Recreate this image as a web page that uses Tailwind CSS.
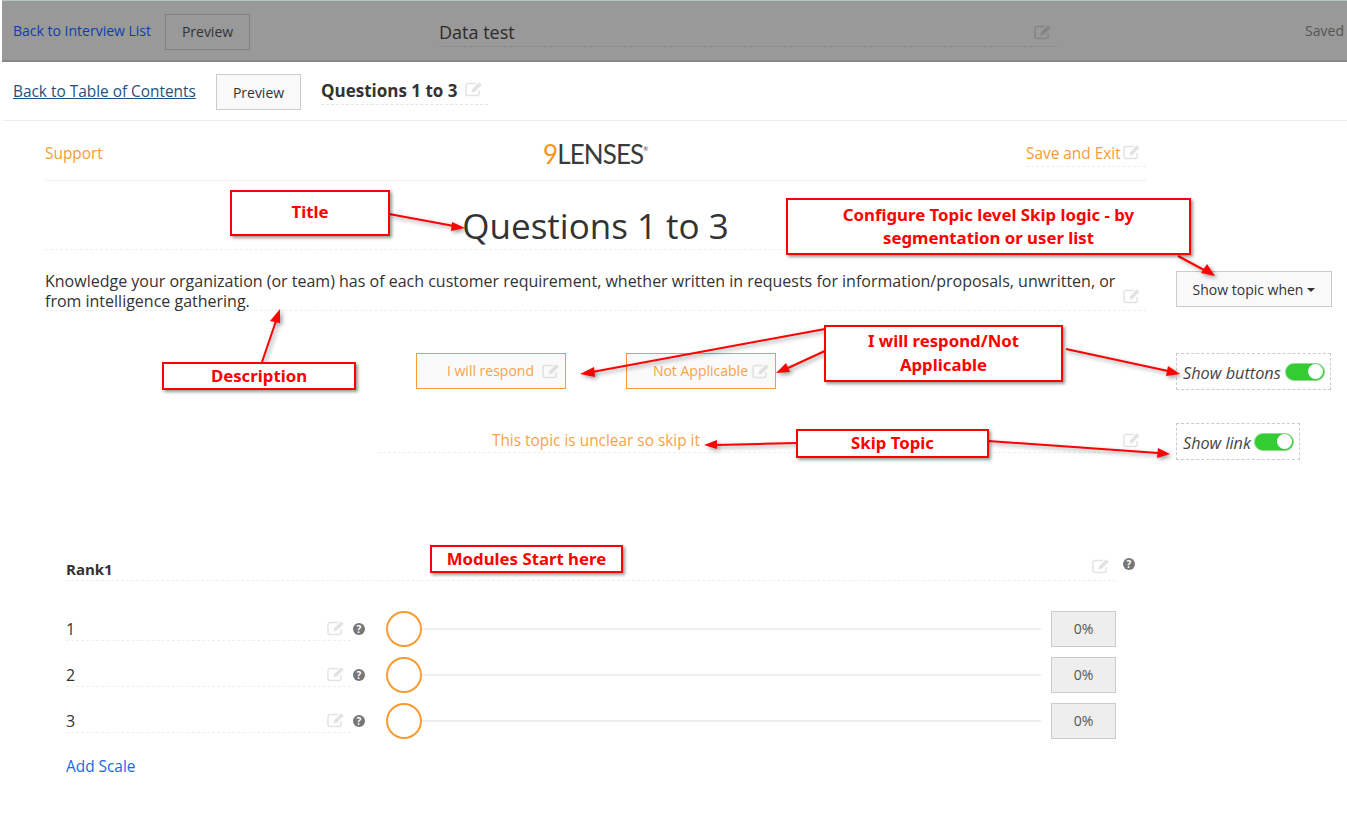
<!DOCTYPE html>
<html>
<head>
<meta charset="utf-8">
<script src="https://cdn.jsdelivr.net/npm/@tailwindcss/browser@4"></script>
</head>
<body class="relative w-[1347px] h-[827px] overflow-hidden bg-white font-['Open_Sans',sans-serif] text-[#333]">
<svg class="hidden"><symbol id="edit" viewBox="0 0 18 16"><path d="M14 9v3.500a2 2 0 0 1-2 2H3a2 2 0 0 1-2-2V4.500a2 2 0 0 1 2-2h8" fill="none" stroke="currentColor" stroke-width="1.500"/><path d="M6.500 11.500l.6-3.200L14 1.200l2.800 2.600-7 7z" fill="currentColor"/></symbol></svg>

<header class="h-[62px] ml-[2px] bg-[#999] border-t border-t-[#b9c6c9] border-b-2 border-b-[#888] flex items-center pl-[11px] text-[14px]">
  <a class="text-[#0b3fa8] w-[152px]">Back to Interview List</a>
  <span class="w-[85px] h-[36px] mt-[2px] border border-[#808080] flex items-center justify-center text-[#333]">Preview</span>
  <div class="ml-[189px] w-[618px] h-[28px] mt-[4px] border-b border-dashed border-[#8a8a8a] flex items-center justify-between pr-[5px] text-[18px]"><span class="text-[#2b2b2b]">Data test</span><svg class="w-[18px] h-[16px] text-[#858585]"><use href="#edit"/></svg></div>
  <span class="ml-auto mr-[3px] text-[#555]">Saved</span>
</header>

<div class="h-[59px] ml-[3px] pl-[10px] border-b border-[#eee] flex items-center text-[14px]">
  <a class="underline text-[#23527c] text-[15.400px] w-[203px] whitespace-nowrap mt-[2px]">Back to Table of Contents</a>
  <span class="w-[85px] h-[36px] mt-[2px] border border-[#ccc] bg-[#f9f9f9] flex items-center justify-center">Preview</span>
  <div class="ml-[20px] w-[167px] h-[27px] mt-[1px] border-b border-dashed border-[#e5e5e5] flex items-center gap-[7px] text-[17px] font-bold"><span>Questions 1 to 3</span><svg class="w-[18px] h-[16px] -mt-[5px] text-[#e3e3e3]"><use href="#edit"/></svg></div>
</div>

<main class="ml-[45px] w-[1302px]">
  <div class="w-[1101px] h-[60px] border-b border-[#eee] flex items-center justify-between text-[15.400px] text-[#f89b35] relative">
    <span class="mt-[6px]">Support</span>
    <span class="absolute left-[498px] top-[13px] font-['Lato',sans-serif] text-[26px] leading-[40px] tracking-[-0.9px] text-[#3a3a3a]"><span class="text-[#f7941e]">9</span>LENSES<sup class="text-[6px] align-super">®</sup></span>
    <span class="ml-auto w-[120px] h-[26px] mt-[7px] border-b border-dashed border-[#eee] flex items-center gap-[2px] whitespace-nowrap"><span>Save and Exit</span><svg class="w-[18px] h-[16px] -mt-[3px] shrink-0 text-[#e3e3e3]"><use href="#edit"/></svg></span>
  </div>

  <div class="w-[1101px] h-[69px] border-b border-dashed border-[#eee] flex items-center justify-center relative">
    <h1 class="text-[35px] font-normal leading-[50px] mt-[22px] text-[#333]">Questions 1 to 3</h1>
    <svg class="absolute right-[5px] top-[35px] w-[18px] h-[16px] text-[#e3e3e3]"><use href="#edit"/></svg>
  </div>

  <div class="flex mt-[20px]">
    <div class="w-[1101px] h-[41px] border-b border-dashed border-[#eee] text-[16px] leading-[20px] relative">
      <p class="w-[1085px] pt-[1px]">Knowledge your organization (or team) has of each customer requirement, whether written in requests for information/proposals, unwritten, or from intelligence gathering.</p>
      <svg class="absolute right-[5px] top-[18px] w-[18px] h-[16px] text-[#e3e3e3]"><use href="#edit"/></svg>
    </div>
    <button class="ml-[30px] w-[156px] h-[36px] mt-[1px] border border-[#ccc] bg-[#f9f9f9] text-[14px] flex items-center justify-center gap-[4px]">Show topic when<span class="mt-[2px] border-x-[4px] border-x-transparent border-t-[4px] border-t-[#333]"></span></button>
  </div>

  <div class="flex mt-[42px]">
    <div class="w-[1101px] pl-[371px] flex gap-[60px] text-[14px] text-[#f9a24a]">
      <span class="w-[150px] h-[36px] border border-[#f89b35] bg-[#fafafa] flex items-center justify-end pr-[5px] gap-[8px]"><span class="-mt-[1px]">I will respond</span><svg class="w-[18px] h-[16px] text-[#e0e0e0]"><use href="#edit"/></svg></span>
      <span class="w-[150px] h-[36px] border border-[#f89b35] bg-[#fafafa] flex items-center justify-end pr-[5px] gap-[4px]"><span class="-mt-[1px]">Not Applicable</span><svg class="w-[18px] h-[16px] text-[#e0e0e0]"><use href="#edit"/></svg></span>
    </div>
    <div class="ml-[30px] w-[155px] h-[37px] border border-dashed border-[#ccc] flex items-center pl-[6px] gap-[4px] text-[16.300px] italic text-[#444]">
      <span class="whitespace-nowrap mt-[3px]">Show buttons</span>
      <span class="w-[40px] h-[18px] rounded-full bg-[#3c3] border border-[#8fd98f] flex items-center justify-end pr-[1px]"><span class="w-[15px] h-[15px] rounded-full bg-white"></span></span>
    </div>
  </div>

  <div class="flex mt-[33px]">
    <div class="w-[1101px] pl-[333px]">
      <div class="h-[30px] border-b border-dashed border-[#eee] flex items-center relative text-[15.400px] text-[#f9a24a]">
        <span class="w-[322px] text-right whitespace-nowrap mt-[7px]">This topic is unclear so skip it</span>
        <svg class="absolute right-[5px] top-[9px] w-[18px] h-[16px] text-[#e3e3e3]"><use href="#edit"/></svg>
      </div>
    </div>
    <div class="ml-[30px] w-[124px] h-[37px] border border-dashed border-[#ccc] flex items-center pl-[6px] gap-[3px] text-[16.200px] italic text-[#444]">
      <span class="whitespace-nowrap mt-[3px]">Show link</span>
      <span class="w-[40px] h-[18px] rounded-full bg-[#3c3] border border-[#8fd98f] flex items-center justify-end pr-[1px]"><span class="w-[15px] h-[15px] rounded-full bg-white"></span></span>
    </div>
  </div>

  <section class="ml-[21px] w-[1071px] mt-[94px]">
    <div class="w-[1050px] h-[27px] border-b border-dashed border-[#eee] flex items-center justify-between relative text-[15px] font-bold">
      <span class="mt-[5px]">Rank1</span>
      <svg class="absolute right-[6px] top-[4px] w-[18px] h-[16px] text-[#e3e3e3]"><use href="#edit"/></svg>
      <span class="absolute -right-[19px] top-[4px] w-[12px] h-[12px] rounded-full bg-[#777] text-white text-[10px] leading-[12px] text-center font-bold">?</span>
    </div>

    <div class="mt-[30px] flex flex-col gap-[10px]">
      <div class="flex items-center h-[36px]">
        <div class="self-start mt-[1px] w-[285px] h-[29px] pt-[7px] border-b border-dashed border-[#eee] text-[16px] leading-[20px] relative">1<svg class="absolute right-[6px] top-[8px] w-[18px] h-[16px] text-[#e3e3e3]"><use href="#edit"/></svg><span class="absolute -right-[14px] top-[11px] w-[12px] h-[12px] rounded-full bg-[#777] text-white text-[10px] leading-[12px] text-center font-bold">?</span></div>
        <span class="ml-[35px] w-[36px] h-[36px] rounded-full border-2 border-[#f89b35] shrink-0"></span>
        <span class="w-[619px] h-[2px] bg-[#eee]"></span>
        <span class="ml-[10px] w-[65px] h-[36px] pb-[2px] border border-[#ccc] bg-[#eee] flex items-center justify-center text-[14px] text-[#555]">0%</span>
      </div>
      <div class="flex items-center h-[36px]">
        <div class="self-start mt-[1px] w-[285px] h-[29px] pt-[7px] border-b border-dashed border-[#eee] text-[16px] leading-[20px] relative">2<svg class="absolute right-[6px] top-[8px] w-[18px] h-[16px] text-[#e3e3e3]"><use href="#edit"/></svg><span class="absolute -right-[14px] top-[11px] w-[12px] h-[12px] rounded-full bg-[#777] text-white text-[10px] leading-[12px] text-center font-bold">?</span></div>
        <span class="ml-[35px] w-[36px] h-[36px] rounded-full border-2 border-[#f89b35] shrink-0"></span>
        <span class="w-[619px] h-[2px] bg-[#eee]"></span>
        <span class="ml-[10px] w-[65px] h-[36px] pb-[2px] border border-[#ccc] bg-[#eee] flex items-center justify-center text-[14px] text-[#555]">0%</span>
      </div>
      <div class="flex items-center h-[36px]">
        <div class="self-start mt-[1px] w-[285px] h-[29px] pt-[7px] border-b border-dashed border-[#eee] text-[16px] leading-[20px] relative">3<svg class="absolute right-[6px] top-[8px] w-[18px] h-[16px] text-[#e3e3e3]"><use href="#edit"/></svg><span class="absolute -right-[14px] top-[11px] w-[12px] h-[12px] rounded-full bg-[#777] text-white text-[10px] leading-[12px] text-center font-bold">?</span></div>
        <span class="ml-[35px] w-[36px] h-[36px] rounded-full border-2 border-[#f89b35] shrink-0"></span>
        <span class="w-[619px] h-[2px] bg-[#eee]"></span>
        <span class="ml-[10px] w-[65px] h-[36px] pb-[2px] border border-[#ccc] bg-[#eee] flex items-center justify-center text-[14px] text-[#555]">0%</span>
      </div>
    </div>
    <a class="block mt-[18px] text-[15.400px] leading-[20px] text-[#1a66e8]">Add Scale</a>
  </section>
</main>

<!-- annotation overlay -->
<svg class="absolute left-0 top-0 w-[1347px] h-[827px] pointer-events-none drop-shadow-[2px_2px_2px_rgba(0,0,0,0.4)]" viewBox="0 0 1347 827" fill="#f00" stroke="none">
  <g stroke="#f00" stroke-width="2" fill="none">
    <path d="M389 214L454 226M1178 256L1204 270M262 362L276 321M825 329L592 372M827 350L788 368M1066 349L1168 371M797 443L716 445M988 441L1158 453"/>
  </g>
  <path d="M465 228L452 222L451 231zM1215 276L1207 264L1201 273zM280 309L270 321L280 323zM580 374L594 367L595 377zM776 373L786 363L790 372zM1180 374L1168 366L1166 376zM704 445L717 440L717 449zM1170 454L1158 448L1157 458z"/>
</svg>
<div class="absolute left-[230px] top-[190px] w-[160px] h-[46px] pb-[3px] border-2 border-[#f00] bg-white shadow-[2px_2px_3px_rgba(0,0,0,0.4)] flex items-center justify-center font-['Noto_Sans',sans-serif] text-[16.800px] font-bold text-[#f00]">Title</div>
<div class="absolute left-[786px] top-[198px] w-[405px] h-[57px] pb-[2px] border-2 border-[#f00] bg-white shadow-[2px_2px_3px_rgba(0,0,0,0.4)] flex items-center justify-center text-center leading-[23px] font-['Noto_Sans',sans-serif] text-[16.800px] font-bold text-[#f00]">Configure Topic level Skip logic - by<br>segmentation or user list</div>
<div class="absolute left-[162px] top-[362px] w-[194px] h-[28px] border-2 border-[#f00] bg-white shadow-[2px_2px_3px_rgba(0,0,0,0.4)] flex items-center justify-center font-['Noto_Sans',sans-serif] text-[16.800px] font-bold text-[#f00]">Description</div>
<div class="absolute left-[824px] top-[325px] w-[239px] h-[57px] pb-[1px] border-2 border-[#f00] bg-white shadow-[2px_2px_3px_rgba(0,0,0,0.4)] flex items-center justify-center text-center leading-[24px] font-['Noto_Sans',sans-serif] text-[16.800px] font-bold text-[#f00]">I will respond/Not<br>Applicable</div>
<div class="absolute left-[796px] top-[429px] w-[193px] h-[29px] pb-[1px] border-2 border-[#f00] bg-white shadow-[2px_2px_3px_rgba(0,0,0,0.4)] flex items-center justify-center font-['Noto_Sans',sans-serif] text-[16.800px] font-bold text-[#f00]">Skip Topic</div>
<div class="absolute left-[430px] top-[545px] w-[193px] h-[28px] border-2 border-[#f00] bg-white shadow-[2px_2px_3px_rgba(0,0,0,0.4)] flex items-center justify-center font-['Noto_Sans',sans-serif] text-[16.800px] font-bold text-[#f00]">Modules Start here</div>
</body>
</html>
